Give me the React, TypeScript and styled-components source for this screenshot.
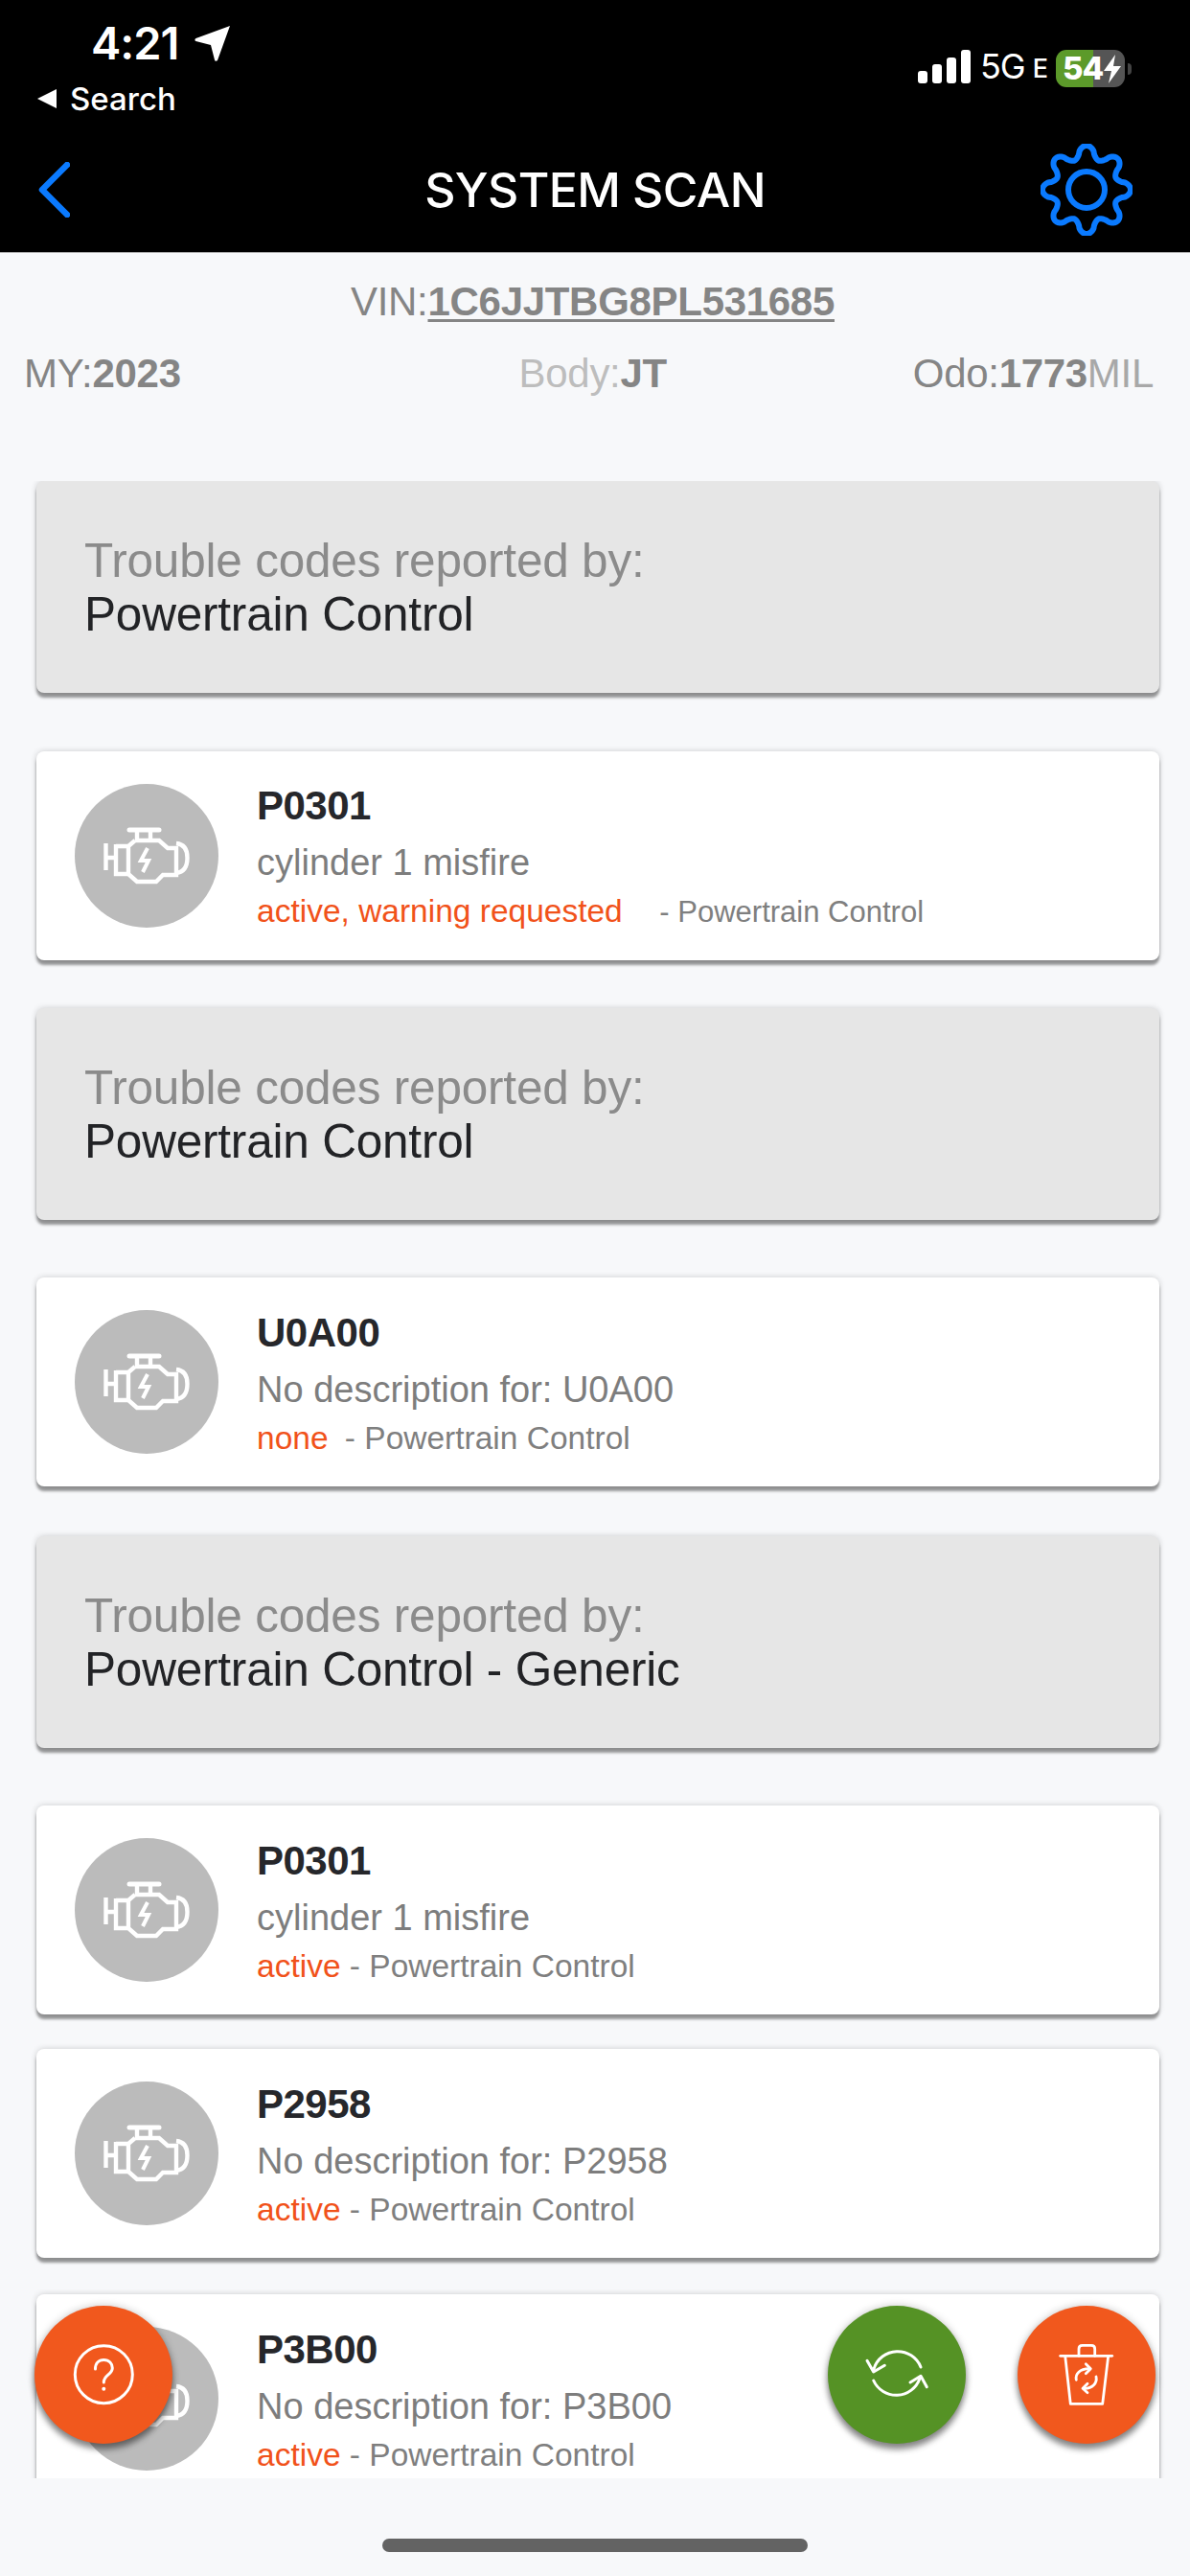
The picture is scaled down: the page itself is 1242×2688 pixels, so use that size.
import React from 'react';
import styled, { createGlobalStyle } from 'styled-components';

const GlobalStyle = createGlobalStyle`
    html, body {
        margin: 0;
        padding: 0;
        width: 1242px;
        height: 2688px;
        overflow: hidden;
        background: #f7f8fa;
        font-family: "Liberation Sans", Arial, sans-serif;
    }
`;

const Page = styled.div`
    position: relative;
    display: flex;
    flex-direction: column;
    width: 1242px;
    height: 2688px;
    background: #f7f8fa;
`;

const TopBar = styled.header`
    display: flex;
    flex-direction: column;
    flex: none;
    height: 264px;
    box-sizing: border-box;
    background: #000;
    color: #fff;
    border-bottom: 1px solid #b0b0b0;
`;

const StatusBar = styled.div`
    display: flex;
    justify-content: space-between;
    height: 124px;
    box-sizing: border-box;
    padding: 22px 68px 0 38px;
`;

const StatusLeft = styled.div`
    display: flex;
    flex-direction: column;
`;

const TimeRow = styled.div`
    display: flex;
    align-items: center;
    gap: 17px;
    padding-left: 57px;
    font-family: Inter, sans-serif;
    font-weight: 600;
    font-size: 47px;
    line-height: 46px;
    letter-spacing: -1px;
`;

const BackToSearch = styled.div`
    display: flex;
    align-items: center;
    gap: 13px;
    margin-top: 17px;
    font-family: Inter, sans-serif;
    font-weight: 500;
    font-size: 33px;
    line-height: 36px;
`;

const StatusRight = styled.div`
    display: flex;
    align-items: flex-end;
    height: 65px;
`;

const NetworkLabel = styled.span`
    margin-left: 10px;
    font-family: Inter, sans-serif;
    font-size: 36px;
    line-height: 35px;
    letter-spacing: -1px;
`;

const NetworkSuffix = styled.span`
    margin-left: 8px;
    margin-right: 8px;
    font-family: Inter, sans-serif;
    font-weight: 500;
    font-size: 27px;
    line-height: 30px;
`;

const Battery = styled.div`
    display: flex;
    align-items: center;
    width: 72px;
    height: 39px;
    box-sizing: border-box;
    padding-left: 7px;
    margin-bottom: -4px;
    border-radius: 11px;
    background: linear-gradient(90deg, #5c9a2a 0 54%, #555 54% 100%);
    font-family: Inter, sans-serif;
    font-weight: 800;
    font-size: 33px;
    letter-spacing: -1px;
    line-height: 39px;
`;

const BatteryNub = styled.div`
    width: 4px;
    height: 12px;
    margin: 0 -7px 9px 3px;
    border-radius: 0 4px 4px 0;
    background: #444;
`;

const NavBar = styled.nav`
    position: relative;
    display: flex;
    align-items: center;
    justify-content: space-between;
    flex: 1;
    padding: 8px 60px 0 40px;
`;

const NavTitle = styled.h1`
    position: absolute;
    left: 0;
    right: 0;
    margin: 0;
    text-align: center;
    font-family: Inter, sans-serif;
    font-weight: 500;
    font-size: 50px;
    letter-spacing: -0.6px;
    color: #fff;
`;

const VehicleInfo = styled.section`
    display: flex;
    flex-direction: column;
    flex: none;
    height: 238px;
    box-sizing: border-box;
    padding: 27px 38px 0 25px;
    color: #858585;
    font-size: 42px;
    line-height: 48px;
    letter-spacing: -0.3px;
`;

const VinRow = styled.div`
    text-align: center;
    margin-right: -8px;
`;

const VinValue = styled.b`
    text-decoration: underline;
    text-decoration-thickness: 3px;
    text-underline-offset: 4px;
`;

const SpecRow = styled.div`
    display: flex;
    justify-content: space-between;
    margin-top: 27px;
`;

const BodyLabel = styled.span`
    margin-left: 96px;
    color: #bdbdbd;
`;

const BodyValue = styled.b`
    color: #858585;
`;

const ThinUnit = styled.span`
    color: #a8a8a8;
`;

const ScrollArea = styled.main`
    flex: none;
    height: 2084px;
    overflow: hidden;
    padding: 0 32px 0 38px;
    box-sizing: border-box;
    width: 1242px;
`;

const ReporterCard = styled.div<{ $top: number }>`
    display: flex;
    flex-direction: column;
    justify-content: center;
    height: 221px;
    margin-top: ${p => p.$top}px;
    padding: 0 50px;
    box-sizing: border-box;
    border-radius: 8px;
    background: #e6e6e6;
    box-shadow: 0 5px 3px rgba(0, 0, 0, 0.38), 0 0 6px rgba(0, 0, 0, 0.18);
    font-size: 49.5px;
    line-height: 56px;
    letter-spacing: -0.2px;
`;

const ReporterLabel = styled.div`
    color: #8b8b8b;
`;

const ReporterName = styled.div`
    color: #222326;
`;

const CodeCard = styled.article<{ $top: number }>`
    display: flex;
    align-items: center;
    gap: 40px;
    height: 218px;
    margin-top: ${p => p.$top}px;
    padding: 0 40px;
    box-sizing: border-box;
    border-radius: 8px;
    background: #fff;
    box-shadow: 0 5px 3px rgba(0, 0, 0, 0.38), 0 0 6px rgba(0, 0, 0, 0.18);
`;

const EngineBadge = styled.div`
    display: flex;
    align-items: center;
    justify-content: center;
    flex: none;
    width: 150px;
    height: 150px;
    border-radius: 50%;
    background: #bbb;
`;

const CodeText = styled.div`
    display: flex;
    flex-direction: column;
`;

const CodeName = styled.div`
    font-weight: 700;
    font-size: 42px;
    line-height: 54px;
    letter-spacing: -0.5px;
    color: #26272b;
`;

const CodeDescription = styled.div`
    margin-top: 8px;
    font-size: 38px;
    line-height: 48px;
    color: #7d7d7d;
`;

const CodeStatus = styled.div<{ $small?: boolean }>`
    margin-top: 7px;
    font-size: ${p => (p.$small ? 31 : 33.5)}px;
    line-height: 40px;
    color: #7f7f7f;
`;

const StatusWord = styled.span<{ $gap?: number; $large?: boolean }>`
    color: #f1521a;
    margin-right: ${p => p.$gap ?? 0}px;
    font-size: ${p => (p.$large ? '33.5px' : 'inherit')};
`;

const Fab = styled.button<{ $color: string; $left: number }>`
    position: absolute;
    left: ${p => p.$left}px;
    top: 2406px;
    width: 144px;
    height: 144px;
    padding: 0;
    border: 0;
    border-radius: 50%;
    background: ${p => p.$color};
    box-shadow: 0 6px 6px rgba(0, 0, 0, 0.42), 0 0 8px rgba(0, 0, 0, 0.22);

    svg {
        display: block;
    }
`;

const HomeIndicator = styled.div`
    position: absolute;
    left: 399px;
    top: 2649px;
    width: 444px;
    height: 14px;
    border-radius: 7px;
    background: #636363;
`;

const gearPath = () => {
    const points: string[] = [];
    for (let i = 0; i < 240; i++) {
        const angle = (i / 240) * Math.PI * 2;
        const wave = Math.cos(8 * angle);
        const radius = 39.5 + 6.5 * Math.sign(wave) * Math.pow(Math.abs(wave), 0.7);
        const x = 48 + radius * Math.sin(angle);
        const y = 48 - radius * Math.cos(angle);
        points.push(`${i === 0 ? 'M' : 'L'}${x.toFixed(2)} ${y.toFixed(2)}`);
    }
    return `${points.join(' ')} Z`;
};

const EngineIcon = () => (
    <svg width="90" height="60" viewBox="0 0 90 60" fill="none" stroke="#fff" strokeWidth="4.4" strokeLinejoin="miter">
        <path d="M27 3H58" strokeWidth="5" strokeLinecap="round" />
        <path d="M35 3V14M49 3V14" />
        <path d="M33 14H58L67 22H76V50H62L55 57H35L26 49H13V18M13 20H26L33 14M26 20V49" />
        <path d="M2.500 17V45M2.500 32H13" />
        <path d="M76 17C85 18 87.500 25 87.500 32C87.500 40 85 47 76 48" />
        <path d="M46 22L39 35H47L41 47" strokeWidth="4" />
    </svg>
);

export default function App(): React.JSX.Element {
    return <Page>
        <GlobalStyle />
        <TopBar>
            <StatusBar>
                <StatusLeft>
                    <TimeRow>
                        4:21
                        <svg width="38" height="38" viewBox="0 0 38 38" fill="#fff">
                            <path d="M37 1L24 37C23 38 21.500 38 21 36.500L17 21L1.500 17C0 16.500 0 15 1.500 14Z" />
                        </svg>
                    </TimeRow>
                    <BackToSearch>
                        <svg width="22" height="20" viewBox="0 0 22 20" fill="#fff">
                            <path d="M21 0V20L1 10Z" />
                        </svg>
                        Search
                    </BackToSearch>
                </StatusLeft>
                <StatusRight>
                    <svg width="55" height="35" viewBox="0 0 55 35" fill="#fff">
                        <rect x="0" y="22" width="10" height="13" rx="3" />
                        <rect x="15" y="15" width="10" height="20" rx="3" />
                        <rect x="30" y="8" width="10" height="27" rx="3" />
                        <rect x="45" y="0" width="10" height="35" rx="3" />
                    </svg>
                    <NetworkLabel>5G</NetworkLabel>
                    <NetworkSuffix>E</NetworkSuffix>
                    <Battery>
                        54
                        <svg width="20" height="30" viewBox="0 0 20 30" fill="#fff">
                            <path d="M13 0L1 17H9L6 30L19 12H11Z" />
                        </svg>
                    </Battery>
                    <BatteryNub />
                </StatusRight>
            </StatusBar>
            <NavBar>
                <svg width="33" height="58" viewBox="0 0 33 58" fill="none" stroke="#0a7aff" strokeWidth="6.500" strokeLinecap="round" strokeLinejoin="round">
                    <path d="M30 3L4 29L30 55" />
                </svg>
                <NavTitle>SYSTEM SCAN</NavTitle>
                <svg width="96" height="96" viewBox="0 0 96 96" fill="none" stroke="#0a7aff" strokeWidth="6">
                    <path d={gearPath()} strokeLinejoin="round" />
                    <circle cx="48" cy="48" r="19" />
                </svg>
            </NavBar>
        </TopBar>
        <VehicleInfo>
            <VinRow>VIN:<VinValue>1C6JJTBG8PL531685</VinValue></VinRow>
            <SpecRow>
                <span>MY:<b>2023</b></span>
                <BodyLabel>Body:<BodyValue>JT</BodyValue></BodyLabel>
                <span>Odo:<b>1773</b><ThinUnit>MIL</ThinUnit></span>
            </SpecRow>
        </VehicleInfo>
        <ScrollArea>
            <ReporterCard $top={0}>
                <ReporterLabel>Trouble codes reported by:</ReporterLabel>
                <ReporterName>Powertrain Control</ReporterName>
            </ReporterCard>
            <CodeCard $top={61}>
                <EngineBadge><EngineIcon /></EngineBadge>
                <CodeText>
                    <CodeName>P0301</CodeName>
                    <CodeDescription>cylinder 1 misfire</CodeDescription>
                    <CodeStatus $small><StatusWord $gap={30} $large>active, warning requested</StatusWord> - Powertrain Control</CodeStatus>
                </CodeText>
            </CodeCard>
            <ReporterCard $top={50}>
                <ReporterLabel>Trouble codes reported by:</ReporterLabel>
                <ReporterName>Powertrain Control</ReporterName>
            </ReporterCard>
            <CodeCard $top={60}>
                <EngineBadge><EngineIcon /></EngineBadge>
                <CodeText>
                    <CodeName>U0A00</CodeName>
                    <CodeDescription>No description for: U0A00</CodeDescription>
                    <CodeStatus><StatusWord $gap={8}>none</StatusWord> - Powertrain Control</CodeStatus>
                </CodeText>
            </CodeCard>
            <ReporterCard $top={52}>
                <ReporterLabel>Trouble codes reported by:</ReporterLabel>
                <ReporterName>Powertrain Control - Generic</ReporterName>
            </ReporterCard>
            <CodeCard $top={60}>
                <EngineBadge><EngineIcon /></EngineBadge>
                <CodeText>
                    <CodeName>P0301</CodeName>
                    <CodeDescription>cylinder 1 misfire</CodeDescription>
                    <CodeStatus><StatusWord>active</StatusWord> - Powertrain Control</CodeStatus>
                </CodeText>
            </CodeCard>
            <CodeCard $top={36}>
                <EngineBadge><EngineIcon /></EngineBadge>
                <CodeText>
                    <CodeName>P2958</CodeName>
                    <CodeDescription>No description for: P2958</CodeDescription>
                    <CodeStatus><StatusWord>active</StatusWord> - Powertrain Control</CodeStatus>
                </CodeText>
            </CodeCard>
            <CodeCard $top={38}>
                <EngineBadge><EngineIcon /></EngineBadge>
                <CodeText>
                    <CodeName>P3B00</CodeName>
                    <CodeDescription>No description for: P3B00</CodeDescription>
                    <CodeStatus><StatusWord>active</StatusWord> - Powertrain Control</CodeStatus>
                </CodeText>
            </CodeCard>
        </ScrollArea>
        <Fab $color="#f1581d" $left={36} aria-label="Help">
            <svg width="144" height="144" viewBox="0 0 144 144" fill="none" stroke="#fff" strokeWidth="3" strokeLinecap="round">
                <circle cx="72.300" cy="71.700" r="30" />
                <path d="M63.500 66C63.500 60 67 56.500 72.300 56.500C78 56.500 81.300 60.500 81.300 65C81.300 72 72.300 72 72.300 80" />
                <circle cx="72.300" cy="86.700" r="2" fill="#fff" stroke="none" />
            </svg>
        </Fab>
        <Fab $color="#559225" $left={864} aria-label="Refresh">
            <svg width="144" height="144" viewBox="0 0 144 144" fill="none" stroke="#fff" strokeWidth="3" strokeLinecap="round" strokeLinejoin="round">
                <path d="M97 64A26 26 0 0 0 48 66" />
                <path d="M41 57.300L47.700 69L59.300 62.300" />
                <path d="M47.700 78A26 26 0 0 0 96 75.700" />
                <path d="M86 80L97 73.300L103.300 84.700" />
            </svg>
        </Fab>
        <Fab $color="#f1581d" $left={1062} aria-label="Clear codes">
            <svg width="144" height="144" viewBox="0 0 144 144" fill="none" stroke="#fff" strokeWidth="2.800" strokeLinecap="round" strokeLinejoin="round">
                <path d="M44.700 52.300H98.700" />
                <path d="M64 52.300V45Q64 41.300 67.700 41.300H77Q80.700 41.300 80.700 45V52.300" />
                <path d="M49.700 52.300L55.300 102.300H88.700L94.700 52.300" />
                <path d="M61.300 77.300C60 71 65 66 74.700 65.700" />
                <path d="M71.300 60.700L76.300 65.700L71.300 70.700" />
                <path d="M82 74C83.500 81 78 86 70 86.300" />
                <path d="M73 81.300L68 86.300L73 90.700" />
            </svg>
        </Fab>
        <HomeIndicator />
    </Page>;
}
